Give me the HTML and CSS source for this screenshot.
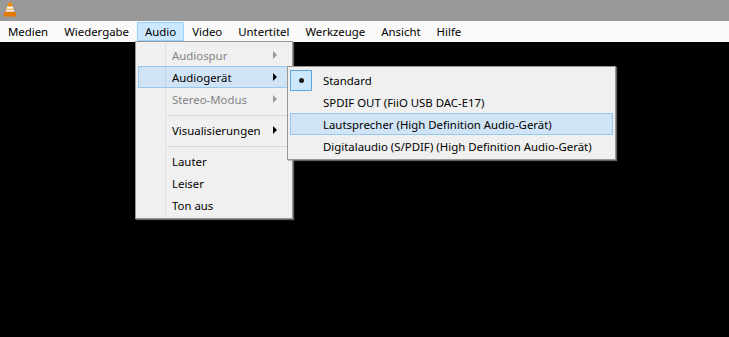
FILE: index.html
```html
<!DOCTYPE html>
<html lang="de">
<head>
  <meta charset="UTF-8" />
  <title>VLC media player</title>
  <link rel="stylesheet" href="styles.css">
</head>
<body>

  <div class="titlebar">
    <svg class="logo" width="14" height="15" viewBox="0 0 14 15">
      <path d="M5.6 0.5 h2.8 l3.4 10 h-9.6z" fill="#f18b00"/>
      <path d="M4.3 4.4 h5.4 l0.8 2.4 h-7z" fill="#f4f4f4"/>
      <path d="M3.3 7.6 h7.4 l0.7 2.1 h-8.8z" fill="#e8e8e8"/>
      <path d="M1.6 10 h10.8 l1.4 4.5 h-13.6z" fill="#e07800"/>
    </svg>
  </div>

  <nav class="menubar">
    <span class="menu-item">Medien</span>
    <span class="menu-item">Wiedergabe</span>
    <span class="menu-item active">Audio</span>
    <span class="menu-item">Video</span>
    <span class="menu-item">Untertitel</span>
    <span class="menu-item">Werkzeuge</span>
    <span class="menu-item">Ansicht</span>
    <span class="menu-item">Hilfe</span>
  </nav>

  <main class="video"></main>

  <!-- Audio menu -->
  <div class="dropdown audio-menu">
    <div class="item disabled">Audiospur<span class="arrow"></span></div>
    <div class="item hover">Audiogerät<span class="arrow"></span></div>
    <div class="item disabled">Stereo-Modus<span class="arrow"></span></div>
    <div class="separator"></div>
    <div class="item">Visualisierungen<span class="arrow"></span></div>
    <div class="separator"></div>
    <div class="item">Lauter</div>
    <div class="item">Leiser</div>
    <div class="item">Ton aus</div>
  </div>

  <!-- Audiogerät submenu -->
  <div class="dropdown device-menu">
    <div class="item checked"><span class="check"><span class="dot"></span></span>Standard</div>
    <div class="item">SPDIF OUT (FiiO USB DAC-E17)</div>
    <div class="item hover">Lautsprecher (High Definition Audio-Gerät)</div>
    <div class="item">Digitalaudio (S/PDIF) (High Definition Audio-Gerät)</div>
  </div>

</body>
</html>
```

FILE: styles.css
```css
body {
  margin: 0;
  font-family: "Noto Sans", "Open Sans", sans-serif;
  font-size: 11.4px;
  color: #000;
  background: #000;
  height: 100vh;
  display: flex;
  flex-direction: column;
  overflow: hidden;
}
.titlebar {
  height: 21px;
  background: #999999;
  display: flex;
  align-items: flex-start;
}
.logo {
  margin: 2px 0 0 3px;
}
.menubar {
  height: 21px;
  background: #fafafa;
  display: flex;
  align-items: center;
}
.menu-item {
  height: 19px;
  line-height: 18px;
  padding: 0 7px;
  border: 1px solid transparent;
  box-sizing: border-box;
}
.menu-item.active {
  background: #cce8ff;
  border-color: #99d1ff;
}
.video {
  flex: 1;
  background: #000;
}
.dropdown {
  position: absolute;
  background: #f0f0f0;
  border: 1px solid #979797;
  padding: 2px;
  box-shadow: 1px 1px 1px rgba(160, 160, 160, 0.6);
}
.audio-menu {
  left: 135px;
  top: 41px;
  width: 152px;
}
.audio-menu::before {
  content: "";
  position: absolute;
  left: 29px;
  top: 2px;
  bottom: 2px;
  width: 1px;
  background: rgba(0, 0, 0, 0.07);
  z-index: 1;
}
.device-menu {
  left: 287px;
  top: 66px;
  width: 323px;
}
.item {
  position: relative;
  height: 22px;
  line-height: 21px;
  padding: 0 12px 0 33px;
  border: 1px solid transparent;
  box-sizing: border-box;
  display: flex;
  justify-content: space-between;
  align-items: center;
  white-space: nowrap;
}
.device-menu .item {
  padding-left: 32px;
  justify-content: flex-start;
}
.item.hover {
  background: #d1e4f5;
  border-color: #99c8ef;
}
.item.disabled {
  color: #838383;
}
.arrow {
  width: 0;
  height: 0;
  border-top: 4px solid transparent;
  border-bottom: 4px solid transparent;
  border-left: 4px solid #000;
}
.item.disabled .arrow {
  border-left-color: #9a9a9a;
}
.separator {
  height: 1px;
  background: #d7d7d7;
  margin: 5px 0 3px 29px;
}
.check {
  position: absolute;
  left: -1px;
  top: 0;
  width: 22px;
  height: 21px;
  box-sizing: border-box;
  background: #cce8ff;
  border: 1px solid #5fa6de;
  display: flex;
  align-items: center;
  justify-content: center;
}
.dot {
  width: 5px;
  height: 5px;
  border-radius: 50%;
  background: #1b1b1b;
}
```
